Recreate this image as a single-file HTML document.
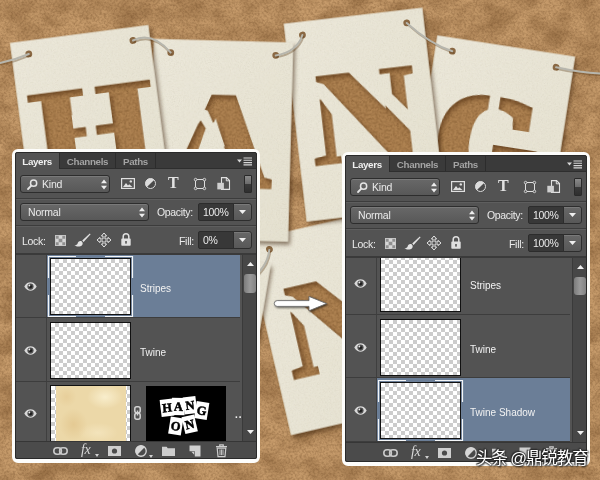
<!DOCTYPE html>
<html><head><meta charset="utf-8"><title>Layers</title>
<style>
html,body{margin:0;padding:0;}
body{width:600px;height:480px;overflow:hidden;position:relative;background:#b4894f;font-family:"Liberation Sans",sans-serif;}
#bg{position:absolute;left:0;top:0;width:600px;height:480px;display:block;}
.panel{position:absolute;box-sizing:border-box;will-change:transform;border:solid #fdfdfb;border-width:3px 3px 4px 3px;border-radius:6px;background:#2b2b2b;overflow:hidden;}
.pin{position:absolute;left:0;top:0;right:0;bottom:0;background:#535353;border-radius:2px;overflow:hidden;font-size:10px;color:#e6e6e6;}
.abs{position:absolute;}
.tabbar{left:0;top:0;right:0;height:16px;background:#3a3a3a;border-bottom:1px solid #2e2e2e;}
.tab{position:absolute;top:0;height:16px;line-height:19.5px;font-weight:bold;font-size:9.8px;color:#a3a3a3;box-sizing:border-box;border-right:1px solid #2c2c2c;text-align:center;letter-spacing:-0.35px;}
.tab.act{background:#535353;color:#f0f0f0;height:17px;}
.dd{position:absolute;box-sizing:border-box;border:1px solid #2d2d2d;border-radius:3px;background:linear-gradient(#686868,#585858);box-shadow:inset 0 1px 0 rgba(255,255,255,.12);}
.lbl{position:absolute;font-size:10px;color:#eaeaea;white-space:nowrap;line-height:12px;letter-spacing:-0.2px;}
.sep{position:absolute;left:0;right:0;height:1px;background:#3c3c3c;box-shadow:0 1px 0 #5e5e5e;}
.num{position:absolute;box-sizing:border-box;background:#383838;border:1px solid #2c2c2c;border-radius:2px 0 0 2px;}
.row{position:absolute;left:0;width:225px;background:#535353;border-bottom:1px solid #3d3d3d;box-sizing:border-box;}
.row.sel .nm{background:#6b7e97;}
.eyecol{position:absolute;left:0;top:0;bottom:0;width:32px;border-right:1px solid #3f3f3f;box-sizing:border-box;}
.nm{position:absolute;left:32px;top:0;bottom:0;right:0;}
.thumb{position:absolute;box-sizing:border-box;border:1px solid #111;background-color:#fff;
 background-image:linear-gradient(45deg,#ccc 25%,transparent 25%,transparent 75%,#ccc 75%),linear-gradient(45deg,#ccc 25%,transparent 25%,transparent 75%,#ccc 75%);
 background-size:8px 8px;background-position:0 0,4px 4px;}
.lname{position:absolute;font-size:10px;color:#f2f2f2;line-height:12px;white-space:nowrap;}
.sb{position:absolute;right:0;width:15px;background:#474747;border-left:1px solid #3a3a3a;box-sizing:border-box;}
.foot{position:absolute;left:0;right:0;bottom:0;height:18px;background:#4b4b4b;border-top:1px solid #363636;box-sizing:border-box;}
svg.ic{position:absolute;overflow:visible;}
.foot svg.ic,.foot .lbl{margin-top:var(--fo,0px);}
#wm{will-change:transform;position:absolute;left:476px;top:446px;font-family:"Liberation Sans","Noto Sans CJK SC",sans-serif;font-size:16.5px;line-height:24px;color:#fff;white-space:nowrap;letter-spacing:-1.1px;
 text-shadow:0 0 2px #222,0 0 2px #222,1px 1px 2px #111,-1px -1px 1px #333;}
</style></head><body>
<svg id="bg" width="600" height="480" viewBox="0 0 600 480">
<defs>
 <filter id="corkN" x="0" y="0" width="100%" height="100%" color-interpolation-filters="sRGB">
  <feTurbulence type="fractalNoise" baseFrequency="0.45" numOctaves="2" seed="7" result="n"/>
  <feColorMatrix in="n" type="matrix" values="0 0 0 0 0.33  0 0 0 0 0.2  0 0 0 0 0.08  0.6 0 0 0 -0.22"/>
 </filter>
 <filter id="corkL" x="0" y="0" width="100%" height="100%" color-interpolation-filters="sRGB">
  <feTurbulence type="fractalNoise" baseFrequency="0.035 0.05" numOctaves="3" seed="11" result="n"/>
  <feColorMatrix in="n" type="matrix" values="0 0 0 0 0.32  0 0 0 0 0.18  0 0 0 0 0.05  0 0.7 0 0 -0.24"/>
 </filter>
 <filter id="paperN" x="0" y="0" width="100%" height="100%" color-interpolation-filters="sRGB">
  <feTurbulence type="fractalNoise" baseFrequency="0.8" numOctaves="2" seed="3" result="n"/>
  <feColorMatrix in="n" type="matrix" values="0 0 0 0 0.5  0 0 0 0 0.46  0 0 0 0 0.34  0.22 0 0 0 -0.09"/>
  <feComposite in2="SourceAlpha" operator="in"/>
 </filter>
 <filter id="cardSh" x="-20%" y="-20%" width="140%" height="140%" color-interpolation-filters="sRGB">
  <feGaussianBlur in="SourceAlpha" stdDeviation="2.2" result="b"/>
  <feOffset in="b" dx="1.5" dy="2.5" result="o"/>
  <feColorMatrix in="o" type="matrix" values="0 0 0 0 0.22  0 0 0 0 0.12  0 0 0 0 0.03  0 0 0 0.55 0" result="s"/>
  <feMerge><feMergeNode in="s"/><feMergeNode in="SourceGraphic"/></feMerge>
 </filter>
 <linearGradient id="paperG" x1="0" y1="0" x2="1" y2="1">
  <stop offset="0" stop-color="#ece8da"/><stop offset="1" stop-color="#e6e2d1"/>
 </linearGradient>

 <filter id="arrowSh" x="-20%" y="-50%" width="140%" height="200%" color-interpolation-filters="sRGB">
  <feGaussianBlur in="SourceAlpha" stdDeviation="1.2" result="b"/>
  <feOffset in="b" dx="0.5" dy="1.2" result="o"/>
  <feColorMatrix in="o" type="matrix" values="0 0 0 0 0  0 0 0 0 0  0 0 0 0 0  0 0 0 0.6 0" result="s"/>
  <feMerge><feMergeNode in="s"/><feMergeNode in="SourceGraphic"/></feMerge>
 </filter>
 <filter id="cutN2" x="-15%" y="-15%" width="130%" height="130%" color-interpolation-filters="sRGB">
  <feColorMatrix in="SourceGraphic" type="matrix" values="0 0 0 0 0  0 0 0 0 0  0 0 0 0 0  1 0 0 1 -1" result="T"/>
  <feMorphology in="T" operator="dilate" radius="5.0 0.5" result="Td"/>
  <feColorMatrix in="SourceGraphic" type="matrix" values="0 0 0 0 0  0 0 0 0 0  0 0 0 0 0  0 0 1 1 -1" result="B"/>
  <feComposite in="Td" in2="B" operator="out" result="S"/>
  <feFlood flood-color="#ae8251" result="c"/>
  <feComposite in="c" in2="S" operator="in" result="base"/>
  <feTurbulence type="fractalNoise" baseFrequency="0.45" numOctaves="2" seed="5" result="n"/>
  <feColorMatrix in="n" type="matrix" values="0 0 0 0 0.28  0 0 0 0 0.15  0 0 0 0 0.03  0.6 0 0 0 -0.22" result="nn"/>
  <feComposite in="nn" in2="S" operator="in" result="tex"/>
  <feFlood flood-color="#000" result="k"/>
  <feComposite in="k" in2="S" operator="out" result="inv"/>
  <feGaussianBlur in="inv" stdDeviation="2.8" result="ib"/>
  <feOffset in="ib" dx="1.5" dy="2.5" result="io"/>
  <feColorMatrix in="io" type="matrix" values="0 0 0 0 0.28  0 0 0 0 0.15  0 0 0 0 0.04  0 0 0 0.6 0" result="ish0"/>
  <feComposite in="ish0" in2="S" operator="in" result="ish"/>
  <feMerge><feMergeNode in="base"/><feMergeNode in="tex"/><feMergeNode in="ish"/></feMerge>
 </filter>
 <filter id="cutO" x="-15%" y="-15%" width="130%" height="130%" color-interpolation-filters="sRGB">
  <feColorMatrix in="SourceGraphic" type="matrix" values="0 0 0 0 0  0 0 0 0 0  0 0 0 0 0  1 0 0 1 -1" result="T"/>
  <feMorphology in="T" operator="dilate" radius="3.2 0.5" result="Td"/>
  <feColorMatrix in="SourceGraphic" type="matrix" values="0 0 0 0 0  0 0 0 0 0  0 0 0 0 0  0 0 1 1 -1" result="B"/>
  <feComposite in="Td" in2="B" operator="out" result="S"/>
  <feFlood flood-color="#ae8251" result="c"/>
  <feComposite in="c" in2="S" operator="in" result="base"/>
  <feTurbulence type="fractalNoise" baseFrequency="0.45" numOctaves="2" seed="5" result="n"/>
  <feColorMatrix in="n" type="matrix" values="0 0 0 0 0.28  0 0 0 0 0.15  0 0 0 0 0.03  0.6 0 0 0 -0.22" result="nn"/>
  <feComposite in="nn" in2="S" operator="in" result="tex"/>
  <feFlood flood-color="#000" result="k"/>
  <feComposite in="k" in2="S" operator="out" result="inv"/>
  <feGaussianBlur in="inv" stdDeviation="2.8" result="ib"/>
  <feOffset in="ib" dx="1.5" dy="2.5" result="io"/>
  <feColorMatrix in="io" type="matrix" values="0 0 0 0 0.28  0 0 0 0 0.15  0 0 0 0 0.04  0 0 0 0.6 0" result="ish0"/>
  <feComposite in="ish0" in2="S" operator="in" result="ish"/>
  <feMerge><feMergeNode in="base"/><feMergeNode in="tex"/><feMergeNode in="ish"/></feMerge>
 </filter>
 <filter id="cutG" x="-15%" y="-15%" width="130%" height="130%" color-interpolation-filters="sRGB">
  <feColorMatrix in="SourceGraphic" type="matrix" values="0 0 0 0 0  0 0 0 0 0  0 0 0 0 0  1 0 0 1 -1" result="T"/>
  <feMorphology in="T" operator="dilate" radius="4.2 0.5" result="Td"/>
  <feColorMatrix in="SourceGraphic" type="matrix" values="0 0 0 0 0  0 0 0 0 0  0 0 0 0 0  0 0 1 1 -1" result="B"/>
  <feComposite in="Td" in2="B" operator="out" result="S"/>
  <feFlood flood-color="#ae8251" result="c"/>
  <feComposite in="c" in2="S" operator="in" result="base"/>
  <feTurbulence type="fractalNoise" baseFrequency="0.45" numOctaves="2" seed="5" result="n"/>
  <feColorMatrix in="n" type="matrix" values="0 0 0 0 0.28  0 0 0 0 0.15  0 0 0 0 0.03  0.6 0 0 0 -0.22" result="nn"/>
  <feComposite in="nn" in2="S" operator="in" result="tex"/>
  <feFlood flood-color="#000" result="k"/>
  <feComposite in="k" in2="S" operator="out" result="inv"/>
  <feGaussianBlur in="inv" stdDeviation="2.8" result="ib"/>
  <feOffset in="ib" dx="1.5" dy="2.5" result="io"/>
  <feColorMatrix in="io" type="matrix" values="0 0 0 0 0.28  0 0 0 0 0.15  0 0 0 0 0.04  0 0 0 0.6 0" result="ish0"/>
  <feComposite in="ish0" in2="S" operator="in" result="ish"/>
  <feMerge><feMergeNode in="base"/><feMergeNode in="tex"/><feMergeNode in="ish"/></feMerge>
 </filter>
 <filter id="cutN" x="-15%" y="-15%" width="130%" height="130%" color-interpolation-filters="sRGB">
  <feColorMatrix in="SourceGraphic" type="matrix" values="0 0 0 0 0  0 0 0 0 0  0 0 0 0 0  1 0 0 1 -1" result="T"/>
  <feMorphology in="T" operator="dilate" radius="5.0 0.5" result="Td"/>
  <feColorMatrix in="SourceGraphic" type="matrix" values="0 0 0 0 0  0 0 0 0 0  0 0 0 0 0  0 0 1 1 -1" result="B"/>
  <feComposite in="Td" in2="B" operator="out" result="S"/>
  <feFlood flood-color="#ae8251" result="c"/>
  <feComposite in="c" in2="S" operator="in" result="base"/>
  <feTurbulence type="fractalNoise" baseFrequency="0.45" numOctaves="2" seed="5" result="n"/>
  <feColorMatrix in="n" type="matrix" values="0 0 0 0 0.28  0 0 0 0 0.15  0 0 0 0 0.03  0.6 0 0 0 -0.22" result="nn"/>
  <feComposite in="nn" in2="S" operator="in" result="tex"/>
  <feFlood flood-color="#000" result="k"/>
  <feComposite in="k" in2="S" operator="out" result="inv"/>
  <feGaussianBlur in="inv" stdDeviation="2.8" result="ib"/>
  <feOffset in="ib" dx="1.5" dy="2.5" result="io"/>
  <feColorMatrix in="io" type="matrix" values="0 0 0 0 0.28  0 0 0 0 0.15  0 0 0 0 0.04  0 0 0 0.6 0" result="ish0"/>
  <feComposite in="ish0" in2="S" operator="in" result="ish"/>
  <feMerge><feMergeNode in="base"/><feMergeNode in="tex"/><feMergeNode in="ish"/></feMerge>
 </filter>
 <filter id="cutA" x="-15%" y="-15%" width="130%" height="130%" color-interpolation-filters="sRGB">
  <feColorMatrix in="SourceGraphic" type="matrix" values="0 0 0 0 0  0 0 0 0 0  0 0 0 0 0  1 0 0 1 -1" result="T"/>
  <feMorphology in="T" operator="dilate" radius="1.2 0.5" result="Td"/>
  <feColorMatrix in="SourceGraphic" type="matrix" values="0 0 0 0 0  0 0 0 0 0  0 0 0 0 0  0 0 1 1 -1" result="B"/>
  <feComposite in="Td" in2="B" operator="out" result="S"/>
  <feFlood flood-color="#ae8251" result="c"/>
  <feComposite in="c" in2="S" operator="in" result="base"/>
  <feTurbulence type="fractalNoise" baseFrequency="0.45" numOctaves="2" seed="5" result="n"/>
  <feColorMatrix in="n" type="matrix" values="0 0 0 0 0.28  0 0 0 0 0.15  0 0 0 0 0.03  0.6 0 0 0 -0.22" result="nn"/>
  <feComposite in="nn" in2="S" operator="in" result="tex"/>
  <feFlood flood-color="#000" result="k"/>
  <feComposite in="k" in2="S" operator="out" result="inv"/>
  <feGaussianBlur in="inv" stdDeviation="2.8" result="ib"/>
  <feOffset in="ib" dx="1.5" dy="2.5" result="io"/>
  <feColorMatrix in="io" type="matrix" values="0 0 0 0 0.28  0 0 0 0 0.15  0 0 0 0 0.04  0 0 0 0.6 0" result="ish0"/>
  <feComposite in="ish0" in2="S" operator="in" result="ish"/>
  <feMerge><feMergeNode in="base"/><feMergeNode in="tex"/><feMergeNode in="ish"/></feMerge>
 </filter>
 <filter id="cutH" x="-15%" y="-15%" width="130%" height="130%" color-interpolation-filters="sRGB">
  <feColorMatrix in="SourceGraphic" type="matrix" values="0 0 0 0 0  0 0 0 0 0  0 0 0 0 0  1 0 0 1 -1" result="T"/>
  <feMorphology in="T" operator="dilate" radius="1.0 0.4" result="Td"/>
  <feColorMatrix in="SourceGraphic" type="matrix" values="0 0 0 0 0  0 0 0 0 0  0 0 0 0 0  0 0 1 1 -1" result="B"/>
  <feComposite in="Td" in2="B" operator="out" result="S"/>
  <feFlood flood-color="#ae8251" result="c"/>
  <feComposite in="c" in2="S" operator="in" result="base"/>
  <feTurbulence type="fractalNoise" baseFrequency="0.45" numOctaves="2" seed="5" result="n"/>
  <feColorMatrix in="n" type="matrix" values="0 0 0 0 0.28  0 0 0 0 0.15  0 0 0 0 0.03  0.6 0 0 0 -0.22" result="nn"/>
  <feComposite in="nn" in2="S" operator="in" result="tex"/>
  <feFlood flood-color="#000" result="k"/>
  <feComposite in="k" in2="S" operator="out" result="inv"/>
  <feGaussianBlur in="inv" stdDeviation="2.8" result="ib"/>
  <feOffset in="ib" dx="1.5" dy="2.5" result="io"/>
  <feColorMatrix in="io" type="matrix" values="0 0 0 0 0.28  0 0 0 0 0.15  0 0 0 0 0.04  0 0 0 0.6 0" result="ish0"/>
  <feComposite in="ish0" in2="S" operator="in" result="ish"/>
  <feMerge><feMergeNode in="base"/><feMergeNode in="tex"/><feMergeNode in="ish"/></feMerge>
 </filter></defs>
<rect width="600" height="480" fill="#c59a6a"/>
<rect width="600" height="480" filter="url(#corkL)"/>
<rect width="600" height="480" filter="url(#corkN)"/>
<g transform="translate(336.6,322.4) rotate(-13.0)">
 <g filter="url(#cardSh)"><rect x="-69.75" y="-99.65" width="139.5" height="199.3" fill="url(#paperG)"/></g>
 <rect x="-69.75" y="-99.65" width="139.5" height="199.3" filter="url(#paperN)"/>
 <g filter="url(#cutN2)"><text transform="translate(0,43.5) skewX(0) scale(1.06,1)" text-anchor="middle" font-family="'Liberation Serif',serif" font-weight="bold" font-size="132" fill="#f00" stroke="#f00" stroke-width="3" stroke-linejoin="miter">N</text><g fill="#00f" style="mix-blend-mode:screen"><path d="M-60,-52 L-44.2,-52 L-44.2,-38 L-37,-35 L13,32 L24.2,47 L24.2,52 L-28,52 L-28,38.5 L-32.5,38.5 L-32.5,-4 L-42,-20.3 L-60,-20.3 Z"/><path d="M-9,-52 L-9,-45.8 L42,19 L46,24 L60,24 L60,20 L41.5,-3 L29.8,-17.5 L29.8,-38.5 L19.7,-38.5 L19.7,-52 Z"/><rect x="52.6" y="-52" width="20" height="24"/></g></g>
 <circle cx="-49.0" cy="-86.3" r="3.4" fill="#8a6843"/><circle cx="52.5" cy="-86.3" r="3.4" fill="#8a6843"/>
</g>
<g transform="translate(185.7,350.7) rotate(9.5)">
 <g filter="url(#cardSh)"><rect x="-69.75" y="-99.65" width="139.5" height="199.3" fill="url(#paperG)"/></g>
 <rect x="-69.75" y="-99.65" width="139.5" height="199.3" filter="url(#paperN)"/>
 <g filter="url(#cutO)"><text transform="translate(0,43.5) skewX(0) scale(1.08,1)" text-anchor="middle" font-family="'Liberation Serif',serif" font-weight="bold" font-size="132" fill="#f00" stroke="#f00" stroke-width="3" stroke-linejoin="miter">O</text><g fill="#00f" style="mix-blend-mode:screen"></g></g>
 <circle cx="-52.5" cy="-86.3" r="3.4" fill="#8a6843"/><circle cx="52.5" cy="-86.3" r="3.4" fill="#8a6843"/>
</g>
<g transform="translate(491.0,144.5) rotate(8.8)">
 <g filter="url(#cardSh)"><rect x="-69.75" y="-99.65" width="139.5" height="199.3" fill="url(#paperG)"/></g>
 <rect x="-69.75" y="-99.65" width="139.5" height="199.3" filter="url(#paperN)"/>
 <g filter="url(#cutG)"><text transform="translate(-5,42.3) skewX(0) scale(0.96,1)" text-anchor="middle" font-family="'Liberation Serif',serif" font-weight="bold" font-size="132" fill="#f00" stroke="#f00" stroke-width="3" stroke-linejoin="miter">G</text><g fill="#00f" style="mix-blend-mode:screen"><rect x="-8.5" y="-60" width="10.75" height="120"/></g></g>
 <circle cx="-52.5" cy="-86.3" r="3.4" fill="#8a6843"/><circle cx="52.5" cy="-86.3" r="3.4" fill="#8a6843"/>
</g>
<g transform="translate(364.5,114.7) rotate(-6.6)">
 <g filter="url(#cardSh)"><rect x="-69.75" y="-99.65" width="139.5" height="199.3" fill="url(#paperG)"/></g>
 <rect x="-69.75" y="-99.65" width="139.5" height="199.3" filter="url(#paperN)"/>
 <g filter="url(#cutN)"><text transform="translate(0,43.5) skewX(0) scale(1.06,1)" text-anchor="middle" font-family="'Liberation Serif',serif" font-weight="bold" font-size="132" fill="#f00" stroke="#f00" stroke-width="3" stroke-linejoin="miter">N</text><g fill="#00f" style="mix-blend-mode:screen"><path d="M-60,-52 L-44.2,-52 L-44.2,-38 L-37,-35 L13,32 L24.2,47 L24.2,52 L-28,52 L-28,38.5 L-32.5,38.5 L-32.5,-4 L-42,-20.3 L-60,-20.3 Z"/><path d="M-9,-52 L-9,-45.8 L42,19 L46,24 L60,24 L60,20 L41.5,-3 L29.8,-17.5 L29.8,-38.5 L19.7,-38.5 L19.7,-52 Z"/><rect x="52.6" y="-52" width="20" height="24"/></g></g>
 <circle cx="-52.5" cy="-86.3" r="3.4" fill="#8a6843"/><circle cx="52.5" cy="-86.3" r="3.4" fill="#8a6843"/>
</g>
<g transform="translate(221.0,140.3) rotate(1.5)">
 <g filter="url(#cardSh)"><rect x="-69.75" y="-99.65" width="139.5" height="199.3" fill="url(#paperG)"/></g>
 <rect x="-69.75" y="-99.65" width="139.5" height="199.3" filter="url(#paperN)"/>
 <g filter="url(#cutA)"><text transform="translate(-0.85,45) skewX(-1.5) scale(1.06,1)" text-anchor="middle" font-family="'Liberation Serif',serif" font-weight="bold" font-size="133" fill="#f00" stroke="#f00" stroke-width="3" stroke-linejoin="miter">A</text><g fill="#00f" style="mix-blend-mode:screen"><path d="M-14.1,-29.5 L3.9,8 L5.6,11.5 L-23.5,11.5 L-22.1,8.7 L-15.6,-11.4 L-20.8,-19.3 L-22.7,-16.3 L-43,-12 L-43,-36 Z"/></g></g>
 <circle cx="-52.5" cy="-86.3" r="3.4" fill="#8a6843"/><circle cx="52.5" cy="-86.3" r="3.4" fill="#8a6843"/>
</g>
<g transform="translate(92.0,132.8) rotate(-7.4)">
 <g filter="url(#cardSh)"><rect x="-69.75" y="-99.65" width="139.5" height="199.3" fill="url(#paperG)"/></g>
 <rect x="-69.75" y="-99.65" width="139.5" height="199.3" filter="url(#paperN)"/>
 <g filter="url(#cutH)"><text transform="translate(2,45.2) skewX(0) scale(1.15,1)" text-anchor="middle" font-family="'DejaVu Serif',serif" font-weight="bold" font-size="124" fill="#f00" stroke="#f00" stroke-width="0" stroke-linejoin="miter">H</text><rect x="-19" y="-6.5" width="42" height="9.3" fill="#f00"/><g fill="#00f" style="mix-blend-mode:screen"><rect x="-5.6" y="-20" width="10.3" height="40"/><rect x="-18" y="-20" width="40" height="13.5"/><rect x="-18" y="2.8" width="40" height="17.2"/></g></g>
 <circle cx="-52.5" cy="-86.3" r="3.4" fill="#8a6843"/><circle cx="52.5" cy="-86.3" r="3.4" fill="#8a6843"/>
</g><g fill="none" stroke="#5a3a18" stroke-opacity="0.35" stroke-width="2" stroke-linecap="round" transform="translate(1,1.6)">
 <path d="M0,63 Q15,60 28.8,54"/><path d="M133,40.5 Q152,31 170.7,52.6"/><path d="M275.7,55.4 Q297,52 302.4,35"/><path d="M406.7,23 Q430,44 452.3,51.2"/><path d="M556.1,67.3 Q580,72.5 600,73.5"/><path d="M269.3,249.9 Q268,262 259,272"/>
</g>
<g fill="none" stroke="#b7b6ad" stroke-width="2" stroke-linecap="round">
 <path d="M0,63 Q15,60 28.8,54"/>
 <path d="M133,40.5 Q152,31 170.7,52.6"/>
 <path d="M275.7,55.4 Q297,52 302.4,35"/>
 <path d="M406.7,23 Q430,44 452.3,51.2"/>
 <path d="M556.1,67.3 Q580,72.5 600,73.5"/>
 <path d="M269.3,249.9 Q268,262 259,272"/>
</g>
<g filter="url(#arrowSh)"><path d="M277.2,300.6 H309 V296.4 L326.6,303.6 L309,310.8 V306.4 H277.2 A2.9,2.9 0 0 1 277.2,300.6 Z" fill="#ffffff" stroke="#6b6b6b" stroke-width="0.9" stroke-linejoin="round"/></g>

</svg>

<div class="panel" style="left:12px;top:149px;width:248px;height:314px;"><div class="pin">
 <div class="abs tabbar"></div>
 <div class="tab act" style="left:0;width:45px;">Layers</div>
 <div class="tab" style="left:45px;width:56px;">Channels</div>
 <div class="tab" style="left:101px;width:40px;">Paths</div>
 <svg class="ic" style="left:222px;top:5px" width="16" height="9" viewBox="0 0 16 9"><path d="M0,2.5h5l-2.5,3z" fill="#d8d8d8"/><path d="M6.5,1h8.5M6.5,3.3h8.5M6.5,5.6h8.5M6.5,7.9h8.5" stroke="#d8d8d8" stroke-width="1.1"/></svg>
 <!-- filter row -->
 <div class="dd" style="left:5px;top:23px;width:90px;height:18px;"></div>
 <svg class="ic" style="left:12px;top:27px" width="11" height="11" viewBox="0 0 11 11"><circle cx="6.6" cy="4.2" r="3.1" fill="none" stroke="#e4e4e4" stroke-width="1.5"/><path d="M4.3,6.6L1,10" stroke="#e4e4e4" stroke-width="1.8" stroke-linecap="round"/></svg>
 <div class="lbl" style="left:27px;top:26px;font-size:10.5px;">Kind</div>
 <svg class="ic" style="left:86px;top:27px" width="6" height="11" viewBox="0 0 6 11"><path d="M0,4.2L3,0.6L6,4.2zM0,6.8L3,10.4L6,6.8z" fill="#ededed"/></svg>
 <!-- filter icons -->
 <svg class="ic" style="left:106px;top:26px" width="14" height="11" viewBox="0 0 14 11"><rect x="0.6" y="0.6" width="12.8" height="9.8" fill="none" stroke="#e0e0e0" stroke-width="1.2"/><path d="M2,9l3-4 2,2.4 1.2-1.2L11.5,9z" fill="#e0e0e0"/><circle cx="9.8" cy="3.4" r="1.2" fill="#e0e0e0"/></svg>
 <svg class="ic" style="left:130px;top:26px" width="11" height="11" viewBox="0 0 11 11"><circle cx="5.5" cy="5.5" r="5" fill="#4a4a4a" stroke="#dcdcdc" stroke-width="1"/><path d="M1.9,9.1A5,5 0 0 1 9.1,1.9z" fill="#dcdcdc"/></svg>
 <div class="lbl" style="left:153px;top:22px;font-family:'Liberation Serif',serif;font-weight:bold;font-size:16px;line-height:18px;color:#e2e2e2;">T</div>
 <svg class="ic" style="left:179px;top:26px" width="12" height="12" viewBox="0 0 12 12"><rect x="1.5" y="1.5" width="9" height="9" fill="none" stroke="#dedede" stroke-width="1"/><g fill="#535353" stroke="#dedede" stroke-width="0.9"><circle cx="1.6" cy="1.6" r="1.3"/><circle cx="10.4" cy="1.6" r="1.3"/><circle cx="1.6" cy="10.4" r="1.3"/><circle cx="10.4" cy="10.4" r="1.3"/></g></svg>
 <svg class="ic" style="left:202px;top:25px" width="13" height="13" viewBox="0 0 13 13"><path d="M4.5,0.6h5l3,3v8.8h-8z" fill="#535353" stroke="#e0e0e0" stroke-width="1.1"/><path d="M9.3,0.6v3.2h3.2" fill="none" stroke="#e0e0e0" stroke-width="1"/><rect x="0.3" y="5.8" width="6.6" height="6.6" fill="#cfcfcf"/></svg>
 <div class="abs" style="left:229px;top:23px;width:8px;height:18px;border:1px solid #2a2a2a;box-sizing:border-box;background:linear-gradient(#8a8a8a 0,#6c6c6c 48%,#3a3a3a 52%,#2f2f2f 100%);border-radius:1px;"></div>
 <div class="sep" style="top:46px;"></div>
 <!-- blend row -->
 <div class="dd" style="left:5px;top:51px;width:129px;height:18px;"></div>
 <div class="lbl" style="left:13px;top:54px;font-size:10.5px;">Normal</div>
 <svg class="ic" style="left:124px;top:55px" width="6" height="11" viewBox="0 0 6 11"><path d="M0,4.2L3,0.6L6,4.2zM0,6.8L3,10.4L6,6.8z" fill="#ededed"/></svg>
 <div class="lbl" style="left:142px;top:54px;font-size:10.5px;letter-spacing:-0.35px;">Opacity:</div>
 <div class="num" style="left:183px;top:51px;width:36px;height:18px;"></div>
 <div class="lbl" style="left:188px;top:54px;font-size:10.5px;letter-spacing:-0.3px;">100%</div>
 <div class="dd" style="left:218px;top:51px;width:19px;height:18px;border-radius:0 3px 3px 0;"></div>
 <svg class="ic" style="left:224px;top:58px" width="7" height="4" viewBox="0 0 7 4"><path d="M0,0h7L3.5,4z" fill="#f0f0f0"/></svg>
 <div class="sep" style="top:73px;"></div>
 <!-- lock row -->
 <div class="lbl" style="left:7px;top:83px;font-size:10.5px;letter-spacing:-0.3px;">Lock:</div>
 <svg class="ic" style="left:40px;top:83px" width="11" height="11" viewBox="0 0 12 12"><rect width="12" height="12" fill="#d6d6d6"/><path d="M0,0h4v4h-4zM8,0h4v4h-4zM4,4h4v4h-4zM0,8h4v4h-4zM8,8h4v4h-4z" fill="#8f8f8f"/><rect x="0.5" y="0.5" width="11" height="11" fill="none" stroke="#c8c8c8"/></svg>
 <svg class="ic" style="left:59px;top:81px" width="17" height="14" viewBox="0 0 17 14"><path d="M15.8,0.4L8.2,7.6l1.4,1.5L16.6,1.2z" fill="#e2e2e2"/><path d="M7.6,8.2c-2.2-0.8-3.6,0.6-4,2.2-0.3,1.2-1.5,1.8-3.2,1.8 2,1.6 5.6,1.8 7.4,0.2 1.3-1.2 1.2-3-0.2-4.2z" fill="#e2e2e2"/></svg>
 <svg class="ic" style="left:82px;top:81px" width="14" height="14" viewBox="0 0 14 14"><path d="M7,0L9.6,3H8v3H11V4.4L14,7L11,9.6V8H8v3H9.6L7,14L4.4,11H6V8H3V9.6L0,7L3,4.4V6H6V3H4.4z" fill="none" stroke="#e4e4e4" stroke-width="1"/></svg>
 <svg class="ic" style="left:106px;top:81px" width="10" height="13" viewBox="0 0 10 13"><path d="M2.2,6V3.6a2.8,2.8 0 0 1 5.6,0V6" fill="none" stroke="#e0e0e0" stroke-width="1.5"/><rect x="0.3" y="5.6" width="9.4" height="7.2" rx="0.8" fill="#e0e0e0"/><rect x="4.2" y="8" width="1.6" height="2.6" fill="#555"/></svg>
 <div class="lbl" style="left:164px;top:83px;font-size:10.5px;letter-spacing:-0.3px;">Fill:</div>
 <div class="num" style="left:183px;top:79px;width:36px;height:18px;"></div>
 <div class="lbl" style="left:188px;top:82px;font-size:10.5px;letter-spacing:-0.3px;">0%</div>
 <div class="dd" style="left:218px;top:79px;width:19px;height:18px;border-radius:0 3px 3px 0;"></div>
 <svg class="ic" style="left:224px;top:86px" width="7" height="4" viewBox="0 0 7 4"><path d="M0,0h7L3.5,4z" fill="#f0f0f0"/></svg>
 <div class="abs" style="left:0;right:0;top:101px;height:2px;background:#3a3a3a;"></div>
 <!-- list -->
 <div class="abs" style="left:0;top:103px;width:226px;height:186px;overflow:hidden;"><div class="row sel" style="top:0px;height:63px;"><div class="nm"></div><div class="eyecol"></div><svg class="ic" style="left:9px;top:27px" width="13" height="9" viewBox="0 0 13 9"><path d="M0.3,4.5C2,1.2 4.4,0.3 6.5,0.3S11,1.2 12.7,4.5C11,7.8 8.6,8.7 6.5,8.7S2,7.8 0.3,4.5z" fill="#d9d9d9"/><circle cx="6.5" cy="4.6" r="3.1" fill="#4e4e4e"/><circle cx="6.5" cy="4.6" r="1.7" fill="#1e1e1e"/><circle cx="5.4" cy="3.5" r="0.9" fill="#e8e8e8"/></svg><div class="thumb" style="left:35px;top:3px;width:81px;height:57px;"></div><svg class="ic" style="left:33px;top:1px" width="85" height="61" viewBox="0 0 85 61"><path d="M0.5,22V0.5H28M57,0.5H84.5V22M84.5,39V60.5H57M28,60.5H0.5V39" fill="none" stroke="#f4f6f8" stroke-width="1.2"/></svg><div class="lname" style="left:125px;top:28px;">Stripes</div></div><div class="row" style="top:63px;height:64px;"><div class="nm"></div><div class="eyecol"></div><svg class="ic" style="left:9px;top:28px" width="13" height="9" viewBox="0 0 13 9"><path d="M0.3,4.5C2,1.2 4.4,0.3 6.5,0.3S11,1.2 12.7,4.5C11,7.8 8.6,8.7 6.5,8.7S2,7.8 0.3,4.5z" fill="#d9d9d9"/><circle cx="6.5" cy="4.6" r="3.1" fill="#4e4e4e"/><circle cx="6.5" cy="4.6" r="1.7" fill="#1e1e1e"/><circle cx="5.4" cy="3.5" r="0.9" fill="#e8e8e8"/></svg><div class="thumb" style="left:35px;top:4px;width:81px;height:57px;"></div><div class="lname" style="left:125px;top:29px;">Twine</div></div><div class="row" style="top:127px;height:60px;"><div class="nm"></div><div class="eyecol"></div><svg class="ic" style="left:9px;top:27px" width="13" height="9" viewBox="0 0 13 9"><path d="M0.3,4.5C2,1.2 4.4,0.3 6.5,0.3S11,1.2 12.7,4.5C11,7.8 8.6,8.7 6.5,8.7S2,7.8 0.3,4.5z" fill="#d9d9d9"/><circle cx="6.5" cy="4.6" r="3.1" fill="#4e4e4e"/><circle cx="6.5" cy="4.6" r="1.7" fill="#1e1e1e"/><circle cx="5.4" cy="3.5" r="0.9" fill="#e8e8e8"/></svg><div class="thumb" style="left:35px;top:3px;width:81px;height:57px;"><div class="abs" style="left:5px;right:4px;top:0;bottom:0;background:radial-gradient(ellipse 18px 12px at 70% 20%,rgba(250,240,208,.9),rgba(250,240,208,0)),radial-gradient(ellipse 14px 16px at 25% 70%,rgba(222,190,130,.55),rgba(222,190,130,0)),radial-gradient(ellipse 20px 10px at 60% 85%,rgba(246,232,195,.7),rgba(246,232,195,0)),radial-gradient(ellipse 10px 10px at 15% 20%,rgba(228,200,145,.6),rgba(228,200,145,0)),#ecd8a8;"></div></div><svg class="ic" style="left:119px;top:24px" width="7" height="14" viewBox="0 0 7 14"><rect x="0.8" y="0.8" width="5.4" height="6" rx="2" fill="none" stroke="#d4d4d4" stroke-width="1.5"/><rect x="0.8" y="7.2" width="5.4" height="6" rx="2" fill="none" stroke="#d4d4d4" stroke-width="1.5"/><path d="M3.5,4.5v5" stroke="#d4d4d4" stroke-width="1.4"/></svg><svg class="ic" style="left:131px;top:4px" width="80" height="55" viewBox="0 0 80 55"><rect width="80" height="55" fill="#000"/>
<g font-family="'Liberation Serif',serif" font-weight="bold" font-size="12.5" text-anchor="middle" stroke="#000" stroke-width="0.5">
<g transform="translate(44,19.2) rotate(-7)"><rect x="-6.4" y="-8.6" width="12.8" height="17.2" fill="#fff" stroke="none"/><text y="4.3" fill="#000">N</text></g>
<g transform="translate(55.7,24.5) rotate(9)"><rect x="-6.4" y="-8.6" width="12.8" height="17.2" fill="#fff" stroke="none"/><text y="4.3" fill="#000">G</text></g>
<g transform="translate(32.3,20.5) rotate(1)"><rect x="-6.4" y="-8.6" width="12.8" height="17.2" fill="#fff" stroke="none"/><text y="4.3" fill="#000">A</text></g>
<g transform="translate(21,21.7) rotate(-7)"><rect x="-6.4" y="-8.6" width="12.8" height="17.2" fill="#fff" stroke="none"/><text y="4.3" fill="#000">H</text></g>
<g transform="translate(43.7,38.3) rotate(-13)"><rect x="-6.4" y="-8.6" width="12.8" height="17.2" fill="#fff" stroke="none"/><text y="4.3" fill="#000">N</text></g>
<g transform="translate(29.8,40) rotate(9)"><rect x="-6.4" y="-8.6" width="12.8" height="17.2" fill="#fff" stroke="none"/><text y="4.3" fill="#000">O</text></g>
</g></svg><div class="lname" style="left:220px;top:27px;font-weight:bold;letter-spacing:1px;">..</div></div></div>
 <!-- scrollbar -->
 <div class="sb" style="top:103px;height:186px;">
  <svg class="ic" style="left:3.5px;top:7px" width="7" height="4" viewBox="0 0 7 4"><path d="M0,4h7L3.5,0z" fill="#f0f0f0"/></svg>
  <div class="abs" style="left:1px;top:19px;width:12px;height:19px;border-radius:3px;background:linear-gradient(90deg,#7c7c7c,#9a9a9a 50%,#838383);"></div>
  <svg class="ic" style="left:4px;bottom:7px" width="7" height="4" viewBox="0 0 7 4"><path d="M0,0h7L3.5,4z" fill="#f0f0f0"/></svg>
 </div>
 <!-- footer -->
 <div class="foot" style="height:18px;--fo:0px">
  <svg class="ic" style="left:38px;top:5px" width="15" height="8" viewBox="0 0 15 8"><rect x="0.8" y="0.8" width="7.6" height="6.4" rx="3.2" fill="none" stroke="#c9c9c9" stroke-width="1.6"/><rect x="6.6" y="0.8" width="7.6" height="6.4" rx="3.2" fill="none" stroke="#c9c9c9" stroke-width="1.6"/></svg>
  <div class="lbl" style="left:66px;top:1px;font-family:'Liberation Serif',serif;font-style:italic;font-size:14px;line-height:14px;color:#d8d8d8;letter-spacing:-0.5px;">fx</div>
  <svg class="ic" style="left:80px;top:12px" width="4" height="3" viewBox="0 0 4 3"><path d="M0,0h4L2,3z" fill="#d0d0d0"/></svg>
  <svg class="ic" style="left:93px;top:4px" width="13" height="10" viewBox="0 0 13 10"><rect width="13" height="10" fill="#cfcfcf"/><circle cx="6.5" cy="5" r="2.6" fill="#4b4b4b"/></svg>
  <svg class="ic" style="left:120px;top:3px" width="12" height="12" viewBox="0 0 11 11"><circle cx="5.5" cy="5.5" r="4.8" fill="#4a4a4a" stroke="#d6d6d6" stroke-width="1.2"/><path d="M1.9,9.1A5,5 0 0 1 9.1,1.9z" fill="#d6d6d6"/></svg>
  <svg class="ic" style="left:134px;top:13px" width="4" height="3" viewBox="0 0 4 3"><path d="M0,0h4L2,3z" fill="#d0d0d0"/></svg>
  <svg class="ic" style="left:147px;top:4px" width="13" height="10" viewBox="0 0 13 10"><path d="M0,0.8h4.6l1.2,1.4H13V10H0z" fill="#cdcdcd"/></svg>
  <svg class="ic" style="left:174px;top:3px" width="12" height="12" viewBox="0 0 12 12"><path d="M0.5,0.5H11.5V11.5H5.8V6.2H0.5z" fill="#cfcfcf"/><path d="M2.4,6.8H5.2V9.8z" fill="#cfcfcf"/></svg>
  <svg class="ic" style="left:201px;top:2px" width="11" height="13" viewBox="0 0 11 13"><path d="M0,2.6h11M3.8,2.4V0.8h3.4v1.6" fill="none" stroke="#cdcdcd" stroke-width="1.3"/><path d="M1.2,4.2h8.6L9,12.6H2z" fill="none" stroke="#cdcdcd" stroke-width="1.2"/><path d="M4,5.5v5.6M5.5,5.5v5.6M7,5.5v5.6" stroke="#cdcdcd" stroke-width="0.9"/></svg>
 </div>
 <div class="abs" style="left:0;top:0;right:0;bottom:0;border:1px solid #2a2a2a;border-radius:2px;pointer-events:none;"></div>
</div>
</div><div class="panel" style="left:342px;top:152px;width:248px;height:314px;"><div class="pin">
 <div class="abs tabbar"></div>
 <div class="tab act" style="left:0;width:45px;">Layers</div>
 <div class="tab" style="left:45px;width:56px;">Channels</div>
 <div class="tab" style="left:101px;width:40px;">Paths</div>
 <svg class="ic" style="left:222px;top:5px" width="16" height="9" viewBox="0 0 16 9"><path d="M0,2.5h5l-2.5,3z" fill="#d8d8d8"/><path d="M6.5,1h8.5M6.5,3.3h8.5M6.5,5.6h8.5M6.5,7.9h8.5" stroke="#d8d8d8" stroke-width="1.1"/></svg>
 <!-- filter row -->
 <div class="dd" style="left:5px;top:23px;width:90px;height:18px;"></div>
 <svg class="ic" style="left:12px;top:27px" width="11" height="11" viewBox="0 0 11 11"><circle cx="6.6" cy="4.2" r="3.1" fill="none" stroke="#e4e4e4" stroke-width="1.5"/><path d="M4.3,6.6L1,10" stroke="#e4e4e4" stroke-width="1.8" stroke-linecap="round"/></svg>
 <div class="lbl" style="left:27px;top:26px;font-size:10.5px;">Kind</div>
 <svg class="ic" style="left:86px;top:27px" width="6" height="11" viewBox="0 0 6 11"><path d="M0,4.2L3,0.6L6,4.2zM0,6.8L3,10.4L6,6.8z" fill="#ededed"/></svg>
 <!-- filter icons -->
 <svg class="ic" style="left:106px;top:26px" width="14" height="11" viewBox="0 0 14 11"><rect x="0.6" y="0.6" width="12.8" height="9.8" fill="none" stroke="#e0e0e0" stroke-width="1.2"/><path d="M2,9l3-4 2,2.4 1.2-1.2L11.5,9z" fill="#e0e0e0"/><circle cx="9.8" cy="3.4" r="1.2" fill="#e0e0e0"/></svg>
 <svg class="ic" style="left:130px;top:26px" width="11" height="11" viewBox="0 0 11 11"><circle cx="5.5" cy="5.5" r="5" fill="#4a4a4a" stroke="#dcdcdc" stroke-width="1"/><path d="M1.9,9.1A5,5 0 0 1 9.1,1.9z" fill="#dcdcdc"/></svg>
 <div class="lbl" style="left:153px;top:22px;font-family:'Liberation Serif',serif;font-weight:bold;font-size:16px;line-height:18px;color:#e2e2e2;">T</div>
 <svg class="ic" style="left:179px;top:26px" width="12" height="12" viewBox="0 0 12 12"><rect x="1.5" y="1.5" width="9" height="9" fill="none" stroke="#dedede" stroke-width="1"/><g fill="#535353" stroke="#dedede" stroke-width="0.9"><circle cx="1.6" cy="1.6" r="1.3"/><circle cx="10.4" cy="1.6" r="1.3"/><circle cx="1.6" cy="10.4" r="1.3"/><circle cx="10.4" cy="10.4" r="1.3"/></g></svg>
 <svg class="ic" style="left:202px;top:25px" width="13" height="13" viewBox="0 0 13 13"><path d="M4.5,0.6h5l3,3v8.8h-8z" fill="#535353" stroke="#e0e0e0" stroke-width="1.1"/><path d="M9.3,0.6v3.2h3.2" fill="none" stroke="#e0e0e0" stroke-width="1"/><rect x="0.3" y="5.8" width="6.6" height="6.6" fill="#cfcfcf"/></svg>
 <div class="abs" style="left:229px;top:23px;width:8px;height:18px;border:1px solid #2a2a2a;box-sizing:border-box;background:linear-gradient(#8a8a8a 0,#6c6c6c 48%,#3a3a3a 52%,#2f2f2f 100%);border-radius:1px;"></div>
 <div class="sep" style="top:46px;"></div>
 <!-- blend row -->
 <div class="dd" style="left:5px;top:51px;width:129px;height:18px;"></div>
 <div class="lbl" style="left:13px;top:54px;font-size:10.5px;">Normal</div>
 <svg class="ic" style="left:124px;top:55px" width="6" height="11" viewBox="0 0 6 11"><path d="M0,4.2L3,0.6L6,4.2zM0,6.8L3,10.4L6,6.8z" fill="#ededed"/></svg>
 <div class="lbl" style="left:142px;top:54px;font-size:10.5px;letter-spacing:-0.35px;">Opacity:</div>
 <div class="num" style="left:183px;top:51px;width:36px;height:18px;"></div>
 <div class="lbl" style="left:188px;top:54px;font-size:10.5px;letter-spacing:-0.3px;">100%</div>
 <div class="dd" style="left:218px;top:51px;width:19px;height:18px;border-radius:0 3px 3px 0;"></div>
 <svg class="ic" style="left:224px;top:58px" width="7" height="4" viewBox="0 0 7 4"><path d="M0,0h7L3.5,4z" fill="#f0f0f0"/></svg>
 <div class="sep" style="top:73px;"></div>
 <!-- lock row -->
 <div class="lbl" style="left:7px;top:83px;font-size:10.5px;letter-spacing:-0.3px;">Lock:</div>
 <svg class="ic" style="left:40px;top:83px" width="11" height="11" viewBox="0 0 12 12"><rect width="12" height="12" fill="#d6d6d6"/><path d="M0,0h4v4h-4zM8,0h4v4h-4zM4,4h4v4h-4zM0,8h4v4h-4zM8,8h4v4h-4z" fill="#8f8f8f"/><rect x="0.5" y="0.5" width="11" height="11" fill="none" stroke="#c8c8c8"/></svg>
 <svg class="ic" style="left:59px;top:81px" width="17" height="14" viewBox="0 0 17 14"><path d="M15.8,0.4L8.2,7.6l1.4,1.5L16.6,1.2z" fill="#e2e2e2"/><path d="M7.6,8.2c-2.2-0.8-3.6,0.6-4,2.2-0.3,1.2-1.5,1.8-3.2,1.8 2,1.6 5.6,1.8 7.4,0.2 1.3-1.2 1.2-3-0.2-4.2z" fill="#e2e2e2"/></svg>
 <svg class="ic" style="left:82px;top:81px" width="14" height="14" viewBox="0 0 14 14"><path d="M7,0L9.6,3H8v3H11V4.4L14,7L11,9.6V8H8v3H9.6L7,14L4.4,11H6V8H3V9.6L0,7L3,4.4V6H6V3H4.4z" fill="none" stroke="#e4e4e4" stroke-width="1"/></svg>
 <svg class="ic" style="left:106px;top:81px" width="10" height="13" viewBox="0 0 10 13"><path d="M2.2,6V3.6a2.8,2.8 0 0 1 5.6,0V6" fill="none" stroke="#e0e0e0" stroke-width="1.5"/><rect x="0.3" y="5.6" width="9.4" height="7.2" rx="0.8" fill="#e0e0e0"/><rect x="4.2" y="8" width="1.6" height="2.6" fill="#555"/></svg>
 <div class="lbl" style="left:164px;top:83px;font-size:10.5px;letter-spacing:-0.3px;">Fill:</div>
 <div class="num" style="left:183px;top:79px;width:36px;height:18px;"></div>
 <div class="lbl" style="left:188px;top:82px;font-size:10.5px;letter-spacing:-0.3px;">100%</div>
 <div class="dd" style="left:218px;top:79px;width:19px;height:18px;border-radius:0 3px 3px 0;"></div>
 <svg class="ic" style="left:224px;top:86px" width="7" height="4" viewBox="0 0 7 4"><path d="M0,0h7L3.5,4z" fill="#f0f0f0"/></svg>
 <div class="abs" style="left:0;right:0;top:101px;height:2px;background:#3a3a3a;"></div>
 <!-- list -->
 <div class="abs" style="left:0;top:103px;width:226px;height:184px;overflow:hidden;"><div class="row" style="top:-6px;height:63px;"><div class="nm"></div><div class="eyecol"></div><svg class="ic" style="left:9px;top:27px" width="13" height="9" viewBox="0 0 13 9"><path d="M0.3,4.5C2,1.2 4.4,0.3 6.5,0.3S11,1.2 12.7,4.5C11,7.8 8.6,8.7 6.5,8.7S2,7.8 0.3,4.5z" fill="#d9d9d9"/><circle cx="6.5" cy="4.6" r="3.1" fill="#4e4e4e"/><circle cx="6.5" cy="4.6" r="1.7" fill="#1e1e1e"/><circle cx="5.4" cy="3.5" r="0.9" fill="#e8e8e8"/></svg><div class="thumb" style="left:35px;top:3px;width:81px;height:57px;"></div><div class="lname" style="left:125px;top:28px;">Stripes</div></div><div class="row" style="top:57px;height:63px;"><div class="nm"></div><div class="eyecol"></div><svg class="ic" style="left:9px;top:28px" width="13" height="9" viewBox="0 0 13 9"><path d="M0.3,4.5C2,1.2 4.4,0.3 6.5,0.3S11,1.2 12.7,4.5C11,7.8 8.6,8.7 6.5,8.7S2,7.8 0.3,4.5z" fill="#d9d9d9"/><circle cx="6.5" cy="4.6" r="3.1" fill="#4e4e4e"/><circle cx="6.5" cy="4.6" r="1.7" fill="#1e1e1e"/><circle cx="5.4" cy="3.5" r="0.9" fill="#e8e8e8"/></svg><div class="thumb" style="left:35px;top:4px;width:81px;height:57px;"></div><div class="lname" style="left:125px;top:29px;">Twine</div></div><div class="row sel" style="top:120px;height:64px;"><div class="nm"></div><div class="eyecol"></div><svg class="ic" style="left:9px;top:28px" width="13" height="9" viewBox="0 0 13 9"><path d="M0.3,4.5C2,1.2 4.4,0.3 6.5,0.3S11,1.2 12.7,4.5C11,7.8 8.6,8.7 6.5,8.7S2,7.8 0.3,4.5z" fill="#d9d9d9"/><circle cx="6.5" cy="4.6" r="3.1" fill="#4e4e4e"/><circle cx="6.5" cy="4.6" r="1.7" fill="#1e1e1e"/><circle cx="5.4" cy="3.5" r="0.9" fill="#e8e8e8"/></svg><div class="thumb" style="left:35px;top:4px;width:81px;height:57px;"></div><svg class="ic" style="left:33px;top:2px" width="85" height="61" viewBox="0 0 85 61"><path d="M0.5,22V0.5H28M57,0.5H84.5V22M84.5,39V60.5H57M28,60.5H0.5V39" fill="none" stroke="#f4f6f8" stroke-width="1.2"/></svg><div class="lname" style="left:125px;top:29px;">Twine Shadow</div></div></div>
 <!-- scrollbar -->
 <div class="sb" style="top:103px;height:184px;">
  <svg class="ic" style="left:3.5px;top:7px" width="7" height="4" viewBox="0 0 7 4"><path d="M0,4h7L3.5,0z" fill="#f0f0f0"/></svg>
  <div class="abs" style="left:1px;top:19px;width:12px;height:18px;border-radius:3px;background:linear-gradient(90deg,#7c7c7c,#9a9a9a 50%,#838383);"></div>
  <svg class="ic" style="left:4px;bottom:7px" width="7" height="4" viewBox="0 0 7 4"><path d="M0,0h7L3.5,4z" fill="#f0f0f0"/></svg>
 </div>
 <!-- footer -->
 <div class="foot" style="height:20px;--fo:1px">
  <svg class="ic" style="left:38px;top:5px" width="15" height="8" viewBox="0 0 15 8"><rect x="0.8" y="0.8" width="7.6" height="6.4" rx="3.2" fill="none" stroke="#c9c9c9" stroke-width="1.6"/><rect x="6.6" y="0.8" width="7.6" height="6.4" rx="3.2" fill="none" stroke="#c9c9c9" stroke-width="1.6"/></svg>
  <div class="lbl" style="left:66px;top:1px;font-family:'Liberation Serif',serif;font-style:italic;font-size:14px;line-height:14px;color:#d8d8d8;letter-spacing:-0.5px;">fx</div>
  <svg class="ic" style="left:80px;top:12px" width="4" height="3" viewBox="0 0 4 3"><path d="M0,0h4L2,3z" fill="#d0d0d0"/></svg>
  <svg class="ic" style="left:93px;top:4px" width="13" height="10" viewBox="0 0 13 10"><rect width="13" height="10" fill="#cfcfcf"/><circle cx="6.5" cy="5" r="2.6" fill="#4b4b4b"/></svg>
  <svg class="ic" style="left:120px;top:3px" width="12" height="12" viewBox="0 0 11 11"><circle cx="5.5" cy="5.5" r="4.8" fill="#4a4a4a" stroke="#d6d6d6" stroke-width="1.2"/><path d="M1.9,9.1A5,5 0 0 1 9.1,1.9z" fill="#d6d6d6"/></svg>
  <svg class="ic" style="left:134px;top:13px" width="4" height="3" viewBox="0 0 4 3"><path d="M0,0h4L2,3z" fill="#d0d0d0"/></svg>
  <svg class="ic" style="left:147px;top:4px" width="13" height="10" viewBox="0 0 13 10"><path d="M0,0.8h4.6l1.2,1.4H13V10H0z" fill="#cdcdcd"/></svg>
  <svg class="ic" style="left:174px;top:3px" width="12" height="12" viewBox="0 0 12 12"><path d="M0.5,0.5H11.5V11.5H5.8V6.2H0.5z" fill="#cfcfcf"/><path d="M2.4,6.8H5.2V9.8z" fill="#cfcfcf"/></svg>
  <svg class="ic" style="left:201px;top:2px" width="11" height="13" viewBox="0 0 11 13"><path d="M0,2.6h11M3.8,2.4V0.8h3.4v1.6" fill="none" stroke="#cdcdcd" stroke-width="1.3"/><path d="M1.2,4.2h8.6L9,12.6H2z" fill="none" stroke="#cdcdcd" stroke-width="1.2"/><path d="M4,5.5v5.6M5.5,5.5v5.6M7,5.5v5.6" stroke="#cdcdcd" stroke-width="0.9"/></svg>
 </div>
 <div class="abs" style="left:0;top:0;right:0;bottom:0;border:1px solid #2a2a2a;border-radius:2px;pointer-events:none;"></div>
</div>
</div>
<div id="wm">头条 @鼎锐教育</div>
</body></html>
